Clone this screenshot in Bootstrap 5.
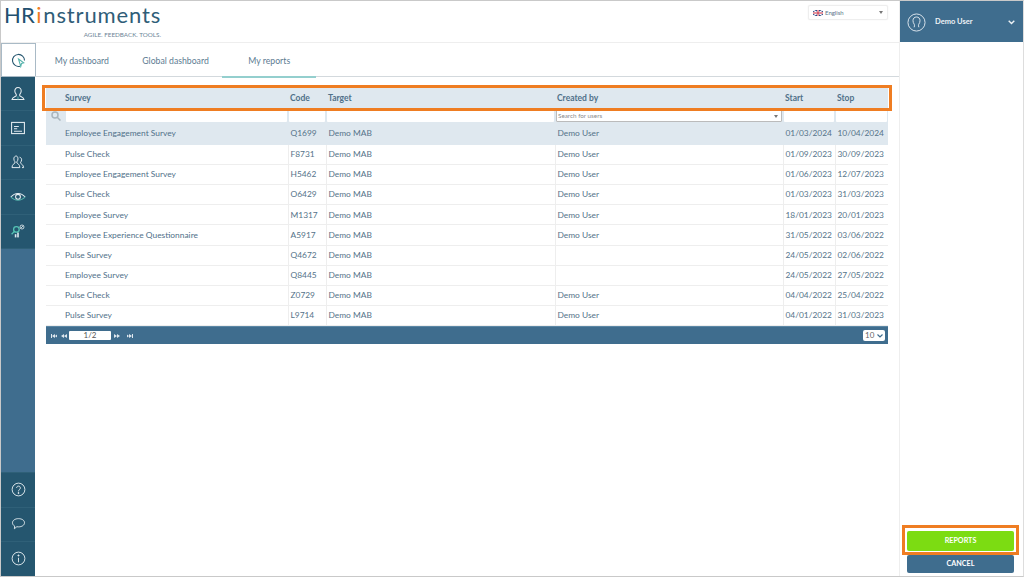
<!DOCTYPE html>
<html lang="en">
<head>
<meta charset="utf-8">
<title>My reports</title>
<link href="https://cdn.jsdelivr.net/npm/bootstrap@5.3.0/dist/css/bootstrap.min.css" rel="stylesheet">
<style>
html,body{height:100%;overflow:hidden}
body{font-family:Lato,"Liberation Sans",sans-serif;font-size:8.4px;color:#4f7089;background:#fff}
.app-frame{width:1024px;height:577px;border:1px solid #c9c9c9;border-right-color:#ddd}
.main-col{width:898px}
.top-strip{height:42px;border-bottom:1px solid #eee;padding:2px 11px 0 3px}
.logo-box{width:158px}
.logo-line{font-size:22px;line-height:24px;color:#2f5d78;letter-spacing:.85px;white-space:nowrap}
.logo-hr{letter-spacing:.3px;color:#22506f}
.logo-i{color:#ef7d22;margin:0 1px}
.logo-tag{font-size:6.3px;line-height:8px;color:#6d8596;text-align:right;margin-top:4px;padding-right:1px}
.lang-pick{width:80px;height:15px;border:1px solid #eee;border-radius:2px;font-size:6px;padding:0 4px;margin-top:2px;box-shadow:0 0 1px #ddd;color:#5b7488}
.flag-row{gap:2px}
.caret-down{width:0;height:0;border-left:2px solid transparent;border-right:2px solid transparent;border-top:3px solid #777}
.rail{width:34px;background:#25566f}
.rail-item{height:34.4px;border-bottom:1px solid #2f6078}
.rail-item svg{width:16px;height:16px}
.rail-active{height:34px;background:#fff;border:1px solid #a9bac6;width:35px;flex:none}
.rail-fill{background:#3f6d8e}
.rail-lower{height:34.6px;border-top:1px solid #2f6078;padding-bottom:2px}
.tab-bar{height:34px;border-bottom:1px solid #d3d9dd;width:864px}
.tab-item{color:#5d7c92;font-size:8.7px;text-decoration:none;height:34px;line-height:35px;text-align:center;width:93.7px}
.tab-on{border-bottom:2px solid #94cfce;height:35px}
.content-area{padding:11px 0 0 11px}
.grid-box{width:842px;position:relative}
.report-grid{width:842px;table-layout:fixed;border-collapse:collapse;font-size:8.4px;margin:0}
.report-grid th{background:#dfe8ef;height:21px;font-weight:700;color:#4f7089;padding:0 2px;font-size:8.5px;vertical-align:middle}
.report-grid th.first-head{padding-left:0}
.report-grid td{height:20.2px;padding:0 2px;border-bottom:1px solid #eee;border-left:1px solid #eee;color:#557389;vertical-align:middle;white-space:nowrap;overflow:hidden}
.report-grid td:first-child{border-left:0}
.report-grid td.first-data{border-left:0;padding-left:0;color:#4f7089}
.report-grid tr.filter-row td{background:#dfe8ef;height:14px;padding:0 1px;border:0}
.report-grid tr.picked td{background:#dfe8ef;border-color:#dfe8ef;height:21.2px}
.filter-input{display:block;width:100%;height:12px;background:#fff;border-radius:1px}
.user-filter{height:12px;background:#fff;border:1px solid #bbb;border-radius:1px;font-size:6.3px;color:#8a8a8a;padding:0 3px 0 1px;line-height:10px}
.pager-bar{height:18px;background:#3f6d8e;width:842px;padding:0 3px 0 5px;border-top:1px solid #5b87a5}
.pager-arrows{width:9px;height:4px;fill:#dfe8ef;margin-right:0}
.page-box{width:42px;height:9px;background:#fff;border-radius:1px;color:#555;font-size:8px;line-height:9px;text-align:center;margin:0 3px 0 0}
.size-box{width:22px;height:11px;background:#fff;border-radius:2px;font-size:8px;line-height:11px;padding:0 2px;color:#666}
.mark-table{position:absolute;left:-4px;top:-3px;width:850px;height:26px;border:3px solid #ef7d22;pointer-events:none}
.side-col{width:124px;border-left:1px solid #eee}
.user-head{height:41px;background:#3f6d8e;color:#eef3f6;padding:1px 8px 0 7px;font-size:7.5px;font-weight:700}
.user-name{margin-left:9px}
.side-actions{padding:0 9px 3px 7px;position:relative}
.go-btn,.back-btn{display:block;width:100%;border:0;color:#fff;font-weight:700;font-size:7.2px;border-radius:2px;padding:0}
.go-btn{height:20px;background:#7cdc12;margin-bottom:4px}
.back-btn{height:18px;background:#3f6d8e}
.mark-btn{position:absolute;left:2px;top:-6px;width:117px;height:30px;border:3px solid #ef7d22;pointer-events:none}
</style>
</head>
<body>
<div class="app-frame d-flex">
  <div class="main-col d-flex flex-column">
    <div class="top-strip d-flex justify-content-between align-items-start">
      <div class="logo-box">
        <div class="logo-line"><span class="logo-hr">HR</span><span class="logo-i">i</span>nstruments</div>
        <div class="logo-tag">AGILE. FEEDBACK. TOOLS.</div>
      </div>
      <div class="lang-pick d-flex align-items-center justify-content-between">
        <span class="d-flex align-items-center flag-row">
          <svg width="10" height="6" viewBox="0 0 10 6"><rect width="10" height="6" fill="#2d4a86"/><path d="M0 0l10 6M10 0L0 6" stroke="#fff" stroke-width="1.2"/><path d="M5 0v6M0 3h10" stroke="#fff" stroke-width="2"/><path d="M5 0v6M0 3h10" stroke="#c8283c" stroke-width="1"/></svg>
          English
        </span>
        <span class="caret-down"></span>
      </div>
    </div>
    <div class="d-flex flex-grow-1">
      <div class="rail d-flex flex-column">
        <div class="rail-active d-flex align-items-center justify-content-center">
          <svg width="15" height="15" viewBox="0 0 20 20" fill="none" stroke="#25566f" stroke-width="1.4"><path d="M12 17.600A8 8 0 1 1 18 10"/><path d="M10 8l7 5-3 1-1 4z" fill="#fff" stroke="#55b3ac"/></svg>
        </div>
        <div class="rail-item d-flex align-items-center justify-content-center">
          <svg viewBox="0 0 20 20" fill="none" stroke="#e8eff3" stroke-width="1.300"><path d="M10 2c-2.600 0-4 2-4 4.200 0 2 1 3.300 1.800 4.300v1.700c-1 1-5 1.600-5.300 4.800h15c-.3-3.200-4.300-3.800-5.300-4.800v-1.700C13 9.500 14 8.200 14 6.200 14 4 12.600 2 10 2z"/><path d="M10 13v4" stroke="#55b3ac"/></svg>
        </div>
        <div class="rail-item d-flex align-items-center justify-content-center">
          <svg viewBox="0 0 20 20" fill="none" stroke="#e8eff3" stroke-width="1.300"><rect x="2" y="3" width="16" height="14"/><path d="M5 8h6M5 11h4M5 14h10" stroke="#dfe8ef"/></svg>
        </div>
        <div class="rail-item d-flex align-items-center justify-content-center">
          <svg viewBox="0 0 20 20" fill="none" stroke="#e8eff3" stroke-width="1.200"><path d="M8 2.500c-2 0-3.200 1.600-3.200 3.600 0 1.800.8 2.800 1.400 3.600v1.600c-1 1-3.600 1.600-3.700 5.700h9.800c-.1-4.100-2.700-4.700-3.700-5.700V9.700c.6-.8 1.400-1.800 1.400-3.600 0-2-1.200-3.600-2-3.600z"/><path d="M12 4c1.600.4 2.500 1.500 2.500 3.200 0 1.500-.7 2.400-1.200 3.200v1.200c1 1 3.400 1.900 3.700 5.400h-2"/></svg>
        </div>
        <div class="rail-item d-flex align-items-center justify-content-center">
          <svg viewBox="0 0 20 20" fill="none" stroke="#e8eff3" stroke-width="1.300"><path d="M1 10C4 6.500 7 5.500 10 5.500s6 1 9 4.500"/><path d="M1 10c3 3 6 4 9 4s6-1 9-4" stroke="#55b3ac"/><circle cx="10" cy="9.700" r="3"/></svg>
        </div>
        <div class="rail-item d-flex align-items-center justify-content-center">
          <svg viewBox="0 0 20 20" fill="none"><circle cx="8" cy="8" r="3.500" stroke="#55c4b5" stroke-width="1.600"/><path d="M5.500 10.500L2 14" stroke="#55c4b5" stroke-width="1.600"/><rect x="6" y="14" width="2" height="4" fill="#dfe8ef"/><rect x="9" y="12" width="2" height="6" fill="#dfe8ef"/><circle cx="15" cy="5" r="2.500" stroke="#e8eff3"/><path d="M13.500 6.500l3-3" stroke="#e8eff3"/></svg>
        </div>
        <div class="rail-fill flex-grow-1"></div>
        <div class="rail-lower d-flex align-items-center justify-content-center">
          <svg viewBox="0 0 20 20" width="15" height="15" fill="none" stroke="#e8eff3" stroke-width="1.200"><circle cx="10" cy="10" r="8.500"/><path d="M7.500 8c0-1.500 1-2.500 2.500-2.500S12.500 6.500 12.500 8c0 2-2.500 2-2.500 4.500"/><circle cx="10" cy="14.700" r=".7" fill="#e8eff3"/></svg>
        </div>
        <div class="rail-lower d-flex align-items-center justify-content-center">
          <svg viewBox="0 0 20 20" width="15" height="15" fill="none" stroke="#e8eff3" stroke-width="1.200"><path d="M10 3.500c4.500 0 8 2.300 8 5.500s-3.500 5.500-8 5.500c-.8 0-1.500 0-2.200-.2L4.500 17l.4-3.600C3 12.400 2 10.800 2 9c0-3.200 3.500-5.500 8-5.500z"/></svg>
        </div>
        <div class="rail-lower d-flex align-items-center justify-content-center">
          <svg viewBox="0 0 20 20" width="15" height="15" fill="none" stroke="#e8eff3" stroke-width="1.200"><circle cx="10" cy="10" r="8.500"/><path d="M10 9v6"/><circle cx="10" cy="6" r=".8" fill="#e8eff3"/></svg>
        </div>
      </div>
      <div class="flex-grow-1">
        <div class="tab-bar d-flex">
          <a class="tab-item" href="#">My dashboard</a>
          <a class="tab-item" href="#">Global dashboard</a>
          <a class="tab-item tab-on" href="#">My reports</a>
        </div>
        <div class="content-area">
          <div class="grid-box">
            <table class="report-grid">
              <colgroup><col style="width:19px"><col style="width:223px"><col style="width:38px"><col style="width:229px"><col style="width:228px"><col style="width:52px"><col style="width:53px"></colgroup>
              <thead><tr><th></th><th class="first-head">Survey</th><th>Code</th><th>Target</th><th>Created by</th><th>Start</th><th>Stop</th></tr></thead>
              <tbody>
                <tr class="filter-row">
                  <td><svg class="d-block ms-1" width="10" height="10" viewBox="0 0 10 10" fill="none" stroke="#a9b5bd" stroke-width="1.500"><circle cx="4" cy="4" r="3"/><path d="M6.200 6.200L9.500 9.500"/></svg></td>
                  <td><span class="filter-input"></span></td><td><span class="filter-input"></span></td><td><span class="filter-input"></span></td>
                  <td><div class="user-filter d-flex justify-content-between align-items-center"><span>Search for users</span><span class="caret-down"></span></div></td>
                  <td><span class="filter-input"></span></td><td><span class="filter-input"></span></td>
                </tr>
                <tr class="picked"><td></td><td class="first-data">Employee Engagement Survey</td><td>Q1699</td><td>Demo MAB</td><td>Demo User</td><td>01/03/2024</td><td>10/04/2024</td></tr>
                <tr><td></td><td class="first-data">Pulse Check</td><td>F8731</td><td>Demo MAB</td><td>Demo User</td><td>01/09/2023</td><td>30/09/2023</td></tr>
                <tr><td></td><td class="first-data">Employee Engagement Survey</td><td>H5462</td><td>Demo MAB</td><td>Demo User</td><td>01/06/2023</td><td>12/07/2023</td></tr>
                <tr><td></td><td class="first-data">Pulse Check</td><td>O6429</td><td>Demo MAB</td><td>Demo User</td><td>01/03/2023</td><td>31/03/2023</td></tr>
                <tr><td></td><td class="first-data">Employee Survey</td><td>M1317</td><td>Demo MAB</td><td>Demo User</td><td>18/01/2023</td><td>20/01/2023</td></tr>
                <tr><td></td><td class="first-data">Employee Experience Questionnaire</td><td>A5917</td><td>Demo MAB</td><td>Demo User</td><td>31/05/2022</td><td>03/06/2022</td></tr>
                <tr><td></td><td class="first-data">Pulse Survey</td><td>Q4672</td><td>Demo MAB</td><td></td><td>24/05/2022</td><td>02/06/2022</td></tr>
                <tr><td></td><td class="first-data">Employee Survey</td><td>Q8445</td><td>Demo MAB</td><td></td><td>24/05/2022</td><td>27/05/2022</td></tr>
                <tr><td></td><td class="first-data">Pulse Check</td><td>Z0729</td><td>Demo MAB</td><td>Demo User</td><td>04/04/2022</td><td>25/04/2022</td></tr>
                <tr><td></td><td class="first-data">Pulse Survey</td><td>L9714</td><td>Demo MAB</td><td>Demo User</td><td>04/01/2022</td><td>31/03/2023</td></tr>
              </tbody>
            </table>
            <div class="pager-bar d-flex align-items-center justify-content-between">
              <div class="d-flex align-items-center">
                <svg class="pager-arrows" viewBox="0 0 9 4"><path d="M0 0h1v4H0zM1 2l3-2v4zM4 2l2-1.500v3z"/></svg>
                <svg class="pager-arrows" viewBox="0 0 9 4"><path d="M1 2l3-2v4zM4 2l3-2v4z"/></svg>
                <span class="page-box">1/2</span>
                <svg class="pager-arrows" viewBox="0 0 9 4"><path d="M0 0l3 2-3 2zM3 0l3 2-3 2z"/></svg>
                <svg class="pager-arrows ms-1" viewBox="0 0 9 4"><path d="M0 .5l2 1.500-2 1.500zM2 0l3 2-3 2zM5 0h1v4H5z"/></svg>
              </div>
              <div class="size-box d-flex justify-content-between align-items-center"><span>10</span><svg width="6" height="4" viewBox="0 0 6 4" fill="none" stroke="#3f6d8e" stroke-width="1.200"><path d="M.5.500L3 3l2.500-2.500"/></svg></div>
            </div>
            <div class="mark-table"></div>
          </div>
        </div>
      </div>
    </div>
  </div>
  <div class="side-col d-flex flex-column">
    <div class="user-head d-flex align-items-center">
      <svg width="19" height="19" viewBox="0 0 20 20" fill="none" stroke="#dfe8ef" stroke-width="1"><circle cx="10" cy="10" r="9"/><path d="M7.500 15c.5-1 .5-2 .2-3C6.800 10.800 6.300 9.500 6.300 8c0-2.300 1.500-3.800 3.700-3.800s3.700 1.500 3.700 3.800c0 1.500-.5 2.800-1.400 4-.3 1-.3 2 .2 3"/></svg>
      <span class="user-name flex-grow-1">Demo User</span>
      <svg width="7" height="5" viewBox="0 0 7 5" fill="none" stroke="#eef3f6" stroke-width="1.400"><path d="M.7.700L3.500 3.500 6.300.700"/></svg>
    </div>
    <div class="flex-grow-1"></div>
    <div class="side-actions">
      <button class="go-btn" type="button">REPORTS</button>
      <button class="back-btn" type="button">CANCEL</button>
      <div class="mark-btn"></div>
    </div>
  </div>
</div>
</body>
</html>
